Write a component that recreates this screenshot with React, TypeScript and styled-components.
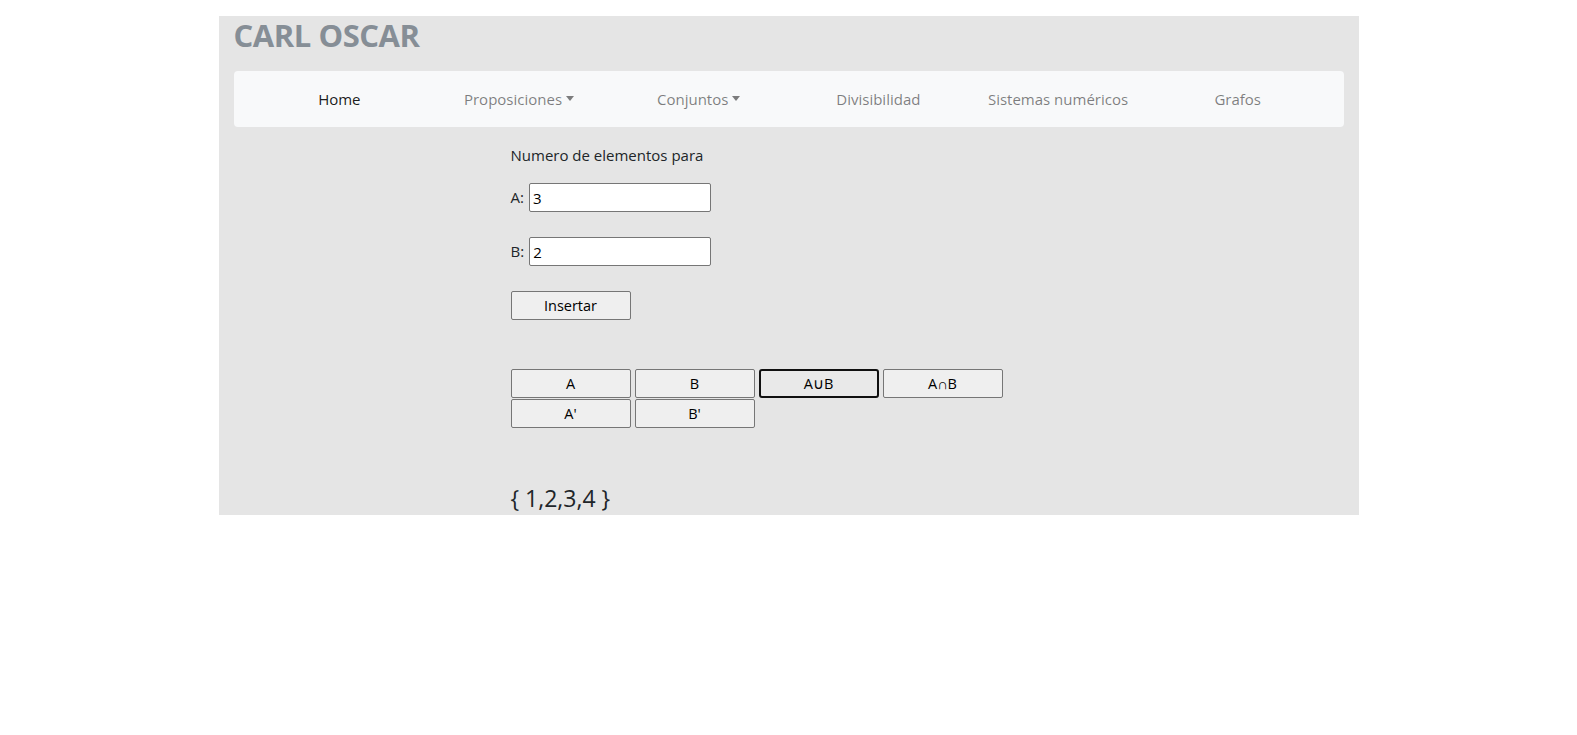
import React from "react";
import styled, { createGlobalStyle } from "styled-components";

const GlobalStyle = createGlobalStyle`
  html, body {
    margin: 0;
    padding: 0;
    background: #ffffff;
  }
  body {
    font-family: "Open Sans", "Noto Sans", "Liberation Sans", sans-serif;
    font-size: 16px;
    line-height: 1.5;
    color: #212529;
  }
  * { box-sizing: border-box; }
`;

const Container = styled.div`
  width: 1140px;
  margin: 16px auto 0;
  padding: 0 15px 2px;
  background: #e5e5e5;
`;

const Title = styled.h2`
  margin: 0;
  height: 55px;
  font-size: 31px;
  line-height: 38px;
  font-weight: 700;
  color: #868e96;
  letter-spacing: -0.45px;
`;

const Navbar = styled.nav`
  display: flex;
  align-items: center;
  height: 56px;
  padding: 8px 16px;
  background: #f8f9fa;
  border-radius: 4px;
`;

const NavItem = styled.a<{ $active?: boolean }>`
  flex: 1 1 0;
  text-align: center;
  padding: 8px 0;
  font-size: 15px;
  line-height: 24px;
  color: ${(p) => (p.$active ? "rgba(0,0,0,0.9)" : "rgba(0,0,0,0.5)")};
  text-decoration: none;
  cursor: pointer;
`;

const Caret = styled.span`
  display: inline-block;
  margin-left: 4px;
  vertical-align: 4px;
  border-top: 5px solid currentColor;
  border-left: 4.5px solid transparent;
  border-right: 4.5px solid transparent;
`;

const Content = styled.main`
  margin-left: 277px;
  padding-top: 16px;
  display: flex;
  flex-direction: column;
  align-items: flex-start;
`;

const Lead = styled.p`
  margin: 0 0 16px;
  font-size: 15px;
  line-height: 24px;
`;

const FieldRow = styled.label`
  display: flex;
  align-items: center;
  height: 29px;
  margin-bottom: 25px;
  font-size: 15px;
`;

const LabelText = styled.span`
  margin-right: 5px;
`;

const NumInput = styled.input`
  width: 182px;
  height: 29px;
  padding: 1px 3px;
  border: 1px solid #767676;
  border-radius: 2px;
  background: #ffffff;
  font-family: inherit;
  font-size: 15px;
  color: #000;
  outline: none;
`;

const Btn = styled.button<{ $focused?: boolean }>`
  width: 120px;
  height: 29px;
  padding: 0;
  border: ${(p) => (p.$focused ? "2px solid #101010" : "1px solid #767676")};
  border-radius: ${(p) => (p.$focused ? "3px" : "2px")};
  background: ${(p) => (p.$focused ? "#e9e9e9" : "#efefef")};
  font-family: inherit;
  font-size: 14.5px;
  color: #000;
  cursor: pointer;
`;

const InsertBtn = styled(Btn)`
  margin-bottom: 49px;
`;

const BtnRow = styled.div`
  display: flex;
  gap: 4px;
  margin-bottom: 1px;
`;

const Result = styled.h4`
  margin: 55px 0 0;
  font-size: 23px;
  font-weight: 400;
  line-height: 29px;
`;

export default function App() {
  return (
    <>
      <GlobalStyle />
      <Container>
        <Title>CARL OSCAR</Title>
        <Navbar>
          <NavItem $active>Home</NavItem>
          <NavItem>
            Proposiciones<Caret />
          </NavItem>
          <NavItem>
            Conjuntos<Caret />
          </NavItem>
          <NavItem>Divisibilidad</NavItem>
          <NavItem>Sistemas numéricos</NavItem>
          <NavItem>Grafos</NavItem>
        </Navbar>
        <Content>
          <Lead>Numero de elementos para</Lead>
          <FieldRow>
            <LabelText>A:</LabelText>
            <NumInput type="text" defaultValue="3" />
          </FieldRow>
          <FieldRow>
            <LabelText>B:</LabelText>
            <NumInput type="text" defaultValue="2" />
          </FieldRow>
          <InsertBtn>Insertar</InsertBtn>
          <BtnRow>
            <Btn>A</Btn>
            <Btn>B</Btn>
            <Btn $focused>A∪B</Btn>
            <Btn>A∩B</Btn>
          </BtnRow>
          <BtnRow>
            <Btn>A'</Btn>
            <Btn>B'</Btn>
          </BtnRow>
          <Result>{"{ 1,2,3,4 }"}</Result>
        </Content>
      </Container>
    </>
  );
}
